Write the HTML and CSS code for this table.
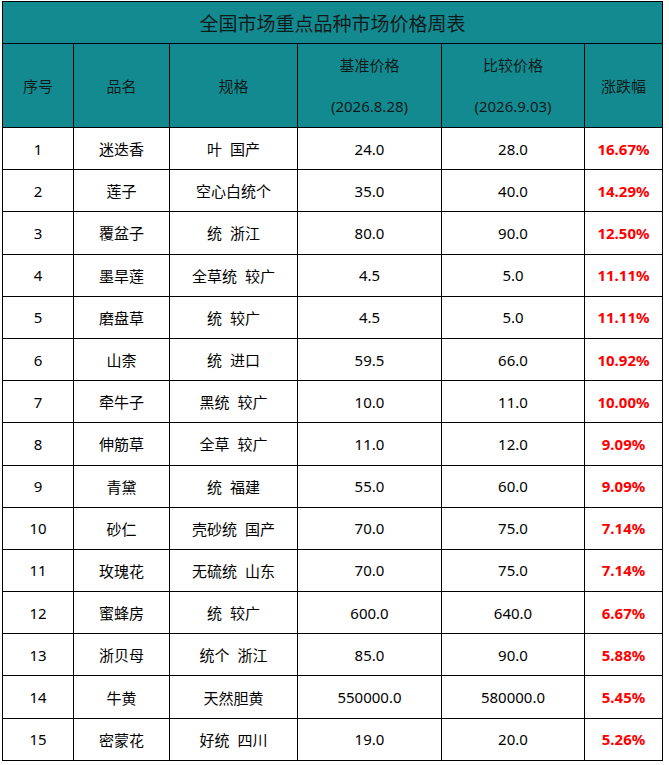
FILE: index.html
```html
<!DOCTYPE html>
<html lang="zh">
<head>
<meta charset="utf-8">
<title>全国市场重点品种市场价格周表</title>
<link rel="stylesheet" href="styles.css">
</head>
<body>
<div class="sheet">
  <div class="title">全国市场重点品种市场价格周表</div>
  <div class="hd">序号</div>
  <div class="hd">品名</div>
  <div class="hd">规格</div>
  <div class="hd two"><span>基准价格</span><span>(2026.8.28)</span></div>
  <div class="hd two"><span>比较价格</span><span>(2026.9.03)</span></div>
  <div class="hd">涨跌幅</div>

  <div class="c">1</div><div class="c">迷迭香</div><div class="c">叶&nbsp; 国产</div><div class="c">24.0</div><div class="c">28.0</div><div class="c up">16.67%</div>
  <div class="c">2</div><div class="c">莲子</div><div class="c">空心白统个</div><div class="c">35.0</div><div class="c">40.0</div><div class="c up">14.29%</div>
  <div class="c">3</div><div class="c">覆盆子</div><div class="c">统&nbsp; 浙江</div><div class="c">80.0</div><div class="c">90.0</div><div class="c up">12.50%</div>
  <div class="c">4</div><div class="c">墨旱莲</div><div class="c">全草统&nbsp; 较广</div><div class="c">4.5</div><div class="c">5.0</div><div class="c up">11.11%</div>
  <div class="c">5</div><div class="c">磨盘草</div><div class="c">统&nbsp; 较广</div><div class="c">4.5</div><div class="c">5.0</div><div class="c up">11.11%</div>
  <div class="c">6</div><div class="c">山柰</div><div class="c">统&nbsp; 进口</div><div class="c">59.5</div><div class="c">66.0</div><div class="c up">10.92%</div>
  <div class="c">7</div><div class="c">牵牛子</div><div class="c">黑统&nbsp; 较广</div><div class="c">10.0</div><div class="c">11.0</div><div class="c up">10.00%</div>
  <div class="c">8</div><div class="c">伸筋草</div><div class="c">全草&nbsp; 较广</div><div class="c">11.0</div><div class="c">12.0</div><div class="c up">9.09%</div>
  <div class="c">9</div><div class="c">青黛</div><div class="c">统&nbsp; 福建</div><div class="c">55.0</div><div class="c">60.0</div><div class="c up">9.09%</div>
  <div class="c">10</div><div class="c">砂仁</div><div class="c">壳砂统&nbsp; 国产</div><div class="c">70.0</div><div class="c">75.0</div><div class="c up">7.14%</div>
  <div class="c">11</div><div class="c">玫瑰花</div><div class="c">无硫统&nbsp; 山东</div><div class="c">70.0</div><div class="c">75.0</div><div class="c up">7.14%</div>
  <div class="c">12</div><div class="c">蜜蜂房</div><div class="c">统&nbsp; 较广</div><div class="c">600.0</div><div class="c">640.0</div><div class="c up">6.67%</div>
  <div class="c">13</div><div class="c">浙贝母</div><div class="c">统个&nbsp; 浙江</div><div class="c">85.0</div><div class="c">90.0</div><div class="c up">5.88%</div>
  <div class="c">14</div><div class="c">牛黄</div><div class="c">天然胆黄</div><div class="c">550000.0</div><div class="c">580000.0</div><div class="c up">5.45%</div>
  <div class="c">15</div><div class="c">密蒙花</div><div class="c">好统&nbsp; 四川</div><div class="c">19.0</div><div class="c">20.0</div><div class="c up">5.26%</div>
</div>
</body>
</html>
```
FILE: styles.css
```css
html, body {
  margin: 0;
  padding: 0;
  background: #ffffff;
}

body {
  padding: 1px 0 0 2px;
  font-family: "Noto Sans", "Noto Sans CJK SC", sans-serif;
  color: #000;
}

.sheet {
  display: grid;
  grid-template-columns: 71px 96px 128px 144px 143px 78px;
  grid-template-rows: 42px 84px repeat(15, 42.2px);
  width: 660px;
  border-left: 1px solid #000;
  border-top: 1px solid #000;
}

.sheet > div {
  border-right: 1px solid #000;
  border-bottom: 1px solid #000;
  display: flex;
  align-items: center;
  justify-content: center;
  text-align: center;
  box-sizing: border-box;
  white-space: nowrap;
}

.title {
  grid-column: 1 / -1;
  background: #138a8f;
  font-size: 19px;
  color: #0d1b1c;
  font-family: "Noto Sans CJK SC", sans-serif;
}

.hd {
  background: #138a8f;
  font-size: 15px;
  color: #0d1b1c;
}

.hd.two {
  flex-direction: column;
  gap: 21px;
  line-height: 20px;
}

.c {
  font-size: 15px;
  background: #fff;
}

.c.up {
  color: #ff0000;
  font-weight: 700;
}
```
